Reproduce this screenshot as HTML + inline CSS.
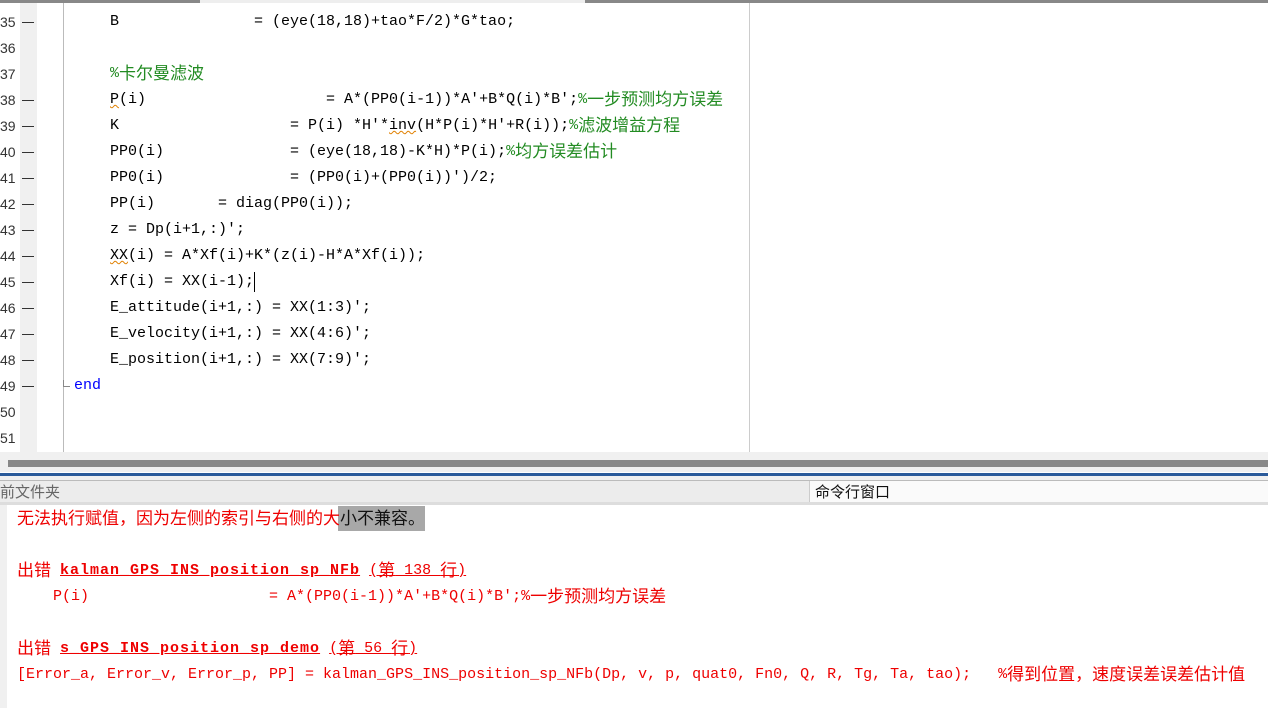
<!DOCTYPE html>
<html><head><meta charset="utf-8"><style>
body{margin:0;width:1268px;height:708px;overflow:hidden;background:#fff;position:relative;font-family:"Liberation Mono","Noto Sans CJK SC",monospace;font-size:15px}
.a{position:absolute;white-space:pre;line-height:18px;height:18px}
.k{font-family:"Noto Sans CJK SC",sans-serif;font-size:17px;line-height:0;position:relative;top:2px}
.ln{position:absolute;left:0;width:20px;text-align:left;color:#333;font-family:"Liberation Sans",sans-serif;font-size:14px;line-height:18px}
.dash{position:absolute;left:22px;width:12px;height:1px;background:#333}
.c{color:#228b22}
.r{color:#e00}
.u{text-decoration:underline;font-weight:bold;letter-spacing:1px}
.ul{text-decoration:underline}
.sq{text-decoration:underline wavy #e08000;text-decoration-thickness:1px}
</style></head><body>
<div style="position:absolute;left:0;top:0;width:1268px;height:3px;background:#888"></div>
<div style="position:absolute;left:200px;top:0;width:385px;height:3px;background:#eee"></div>
<div style="position:absolute;left:20px;top:3px;width:17px;height:449px;background:#f0f0f0"></div>
<div style="position:absolute;left:63px;top:3px;width:1px;height:449px;background:#bbb"></div>
<div style="position:absolute;left:749px;top:3px;width:1px;height:449px;background:#ccc"></div>
<div style="position:absolute;left:0;top:452px;width:1268px;height:20px;background:#f0f0f0"></div>
<div style="position:absolute;left:8px;top:460px;width:1260px;height:7px;background:#888"></div>
<div style="position:absolute;left:0;top:473px;width:1268px;height:3px;background:#2a5a9a"></div>
<div style="position:absolute;left:0;top:476px;width:1268px;height:4px;background:#f0f0f0"></div>
<div style="position:absolute;left:0;top:480px;width:1268px;height:1px;background:#bbb"></div>
<div style="position:absolute;left:0;top:481px;width:1268px;height:21px;background:#ececec"></div>
<div style="position:absolute;left:809px;top:481px;width:1px;height:21px;background:#ccc"></div>
<div style="position:absolute;left:810px;top:481px;width:458px;height:21px;background:#fafafa"></div>
<div class="a" style="left:0;top:483px;color:#666;font-family:'Noto Sans CJK SC',sans-serif;font-size:15px">前文件夹</div>
<div class="a" style="left:815px;top:483px;color:#111;font-family:'Noto Sans CJK SC',sans-serif;font-size:15px">命令行窗口</div>
<div style="position:absolute;left:0;top:502px;width:1268px;height:3px;background:#ddd"></div>
<div style="position:absolute;left:0;top:505px;width:7px;height:203px;background:#f0f0f0"></div>

<div class="ln" style="top:13px">35</div><div class="dash" style="top:22px"></div>
<div class="ln" style="top:39px">36</div>
<div class="ln" style="top:65px">37</div>
<div class="ln" style="top:91px">38</div><div class="dash" style="top:100px"></div>
<div class="ln" style="top:117px">39</div><div class="dash" style="top:126px"></div>
<div class="ln" style="top:143px">40</div><div class="dash" style="top:152px"></div>
<div class="ln" style="top:169px">41</div><div class="dash" style="top:178px"></div>
<div class="ln" style="top:195px">42</div><div class="dash" style="top:204px"></div>
<div class="ln" style="top:221px">43</div><div class="dash" style="top:230px"></div>
<div class="ln" style="top:247px">44</div><div class="dash" style="top:256px"></div>
<div class="ln" style="top:273px">45</div><div class="dash" style="top:282px"></div>
<div class="ln" style="top:299px">46</div><div class="dash" style="top:308px"></div>
<div class="ln" style="top:325px">47</div><div class="dash" style="top:334px"></div>
<div class="ln" style="top:351px">48</div><div class="dash" style="top:360px"></div>
<div class="ln" style="top:377px">49</div><div class="dash" style="top:386px"></div>
<div class="ln" style="top:403px">50</div>
<div class="ln" style="top:429px">51</div>
<div style="position:absolute;left:63px;top:380px;width:1px;height:7px;background:#888"></div>
<div style="position:absolute;left:63px;top:386px;width:7px;height:1px;background:#888"></div>

<div class="a" style="left:110px;top:13px">B               = (eye(18,18)+tao*F/2)*G*tao;</div>
<div class="a c" style="left:110px;top:65px">%<span class="k">卡尔曼滤波</span></div>
<div class="a" style="left:110px;top:91px"><span class="sq">P</span>(i)                    = A*(PP0(i-1))*A'+B*Q(i)*B';<span class="c">%<span class="k">一步预测均方误差</span></span></div>
<div class="a" style="left:110px;top:117px">K                   = P(i) *H'*<span class="sq">inv</span>(H*P(i)*H'+R(i));<span class="c">%<span class="k">滤波增益方程</span></span></div>
<div class="a" style="left:110px;top:143px">PP0(i)              = (eye(18,18)-K*H)*P(i);<span class="c">%<span class="k">均方误差估计</span></span></div>
<div class="a" style="left:110px;top:169px">PP0(i)              = (PP0(i)+(PP0(i))')/2;</div>
<div class="a" style="left:110px;top:195px">PP(i)       = diag(PP0(i));</div>
<div class="a" style="left:110px;top:221px">z = Dp(i+1,:)';</div>
<div class="a" style="left:110px;top:247px"><span class="sq">XX</span>(i) = A*Xf(i)+K*(z(i)-H*A*Xf(i));</div>
<div class="a" style="left:110px;top:273px">Xf(i) = XX(i-1);</div>
<div style="position:absolute;left:254px;top:272px;width:1px;height:20px;background:#000"></div>
<div class="a" style="left:110px;top:299px">E_attitude(i+1,:) = XX(1:3)';</div>
<div class="a" style="left:110px;top:325px">E_velocity(i+1,:) = XX(4:6)';</div>
<div class="a" style="left:110px;top:351px">E_position(i+1,:) = XX(7:9)';</div>
<div class="a" style="left:74px;top:377px;color:#00f">end</div>

<div style="position:absolute;left:338px;top:506px;width:87px;height:25px;background:#a8a8a8"></div>
<div class="a r" style="left:17px;top:510px"><span class="k">无法执行赋值，因为左侧的索引与右侧的大</span><span class="k" style="color:#111">小不兼容。</span></div>
<div class="a r" style="left:17px;top:562px"><span class="k">出错</span> <span class="u">kalman_GPS_INS_position_sp_NFb</span> <span class="ul">(<span class="k">第</span> 138 <span class="k">行</span>)</span></div>
<div class="a r" style="left:17px;top:588px">    P(i)                    = A*(PP0(i-1))*A'+B*Q(i)*B';%<span class="k">一步预测均方误差</span></div>
<div class="a r" style="left:17px;top:640px"><span class="k">出错</span> <span class="u">s_GPS_INS_position_sp_demo</span> <span class="ul">(<span class="k">第</span> 56 <span class="k">行</span>)</span></div>
<div class="a r" style="left:17px;top:666px">[Error_a, Error_v, Error_p, PP] = kalman_GPS_INS_position_sp_NFb(Dp, v, p, quat0, Fn0, Q, R, Tg, Ta, tao);   %<span class="k">得到位置，速度误差误差估计值</span></div>
</body></html>
